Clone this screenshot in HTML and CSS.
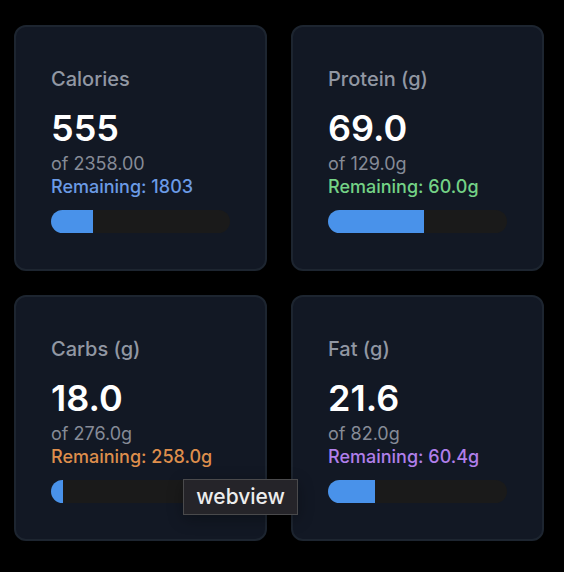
FILE: index.html
```html
<!DOCTYPE html>
<html lang="en">
<head>
<meta charset="utf-8">
<meta name="viewport" content="width=device-width, initial-scale=1">
<title>Daily nutrition</title>
<link rel="stylesheet" href="styles.css">
</head>
<body>
<main class="grid">
  <section class="card calories">
    <h2 class="label">Calories</h2>
    <p class="value">555</p>
    <p class="goal">of 2358.00</p>
    <p class="remaining">Remaining: 1803</p>
    <div class="bar"><div class="fill" style="width: 23.5%"></div></div>
  </section>
  <section class="card protein">
    <h2 class="label">Protein (g)</h2>
    <p class="value">69.0</p>
    <p class="goal">of 129.0g</p>
    <p class="remaining">Remaining: 60.0g</p>
    <div class="bar"><div class="fill" style="width: 53.5%"></div></div>
  </section>
  <section class="card carbs">
    <h2 class="label">Carbs (g)</h2>
    <p class="value">18.0</p>
    <p class="goal">of 276.0g</p>
    <p class="remaining">Remaining: 258.0g</p>
    <div class="bar"><div class="fill" style="width: 6.5%"></div></div>
    <div class="tooltip" role="tooltip">webview</div>
  </section>
  <section class="card fat">
    <h2 class="label">Fat (g)</h2>
    <p class="value">21.6</p>
    <p class="goal">of 82.0g</p>
    <p class="remaining">Remaining: 60.4g</p>
    <div class="bar"><div class="fill" style="width: 26.3%"></div></div>
  </section>
</main>
</body>
</html>
```
FILE: styles.css
```css
* {
  box-sizing: border-box;
}

body {
  margin: 0;
  background: #000;
  color: #fff;
  font-family: Inter, "Liberation Sans", sans-serif;
}

.grid {
  display: grid;
  grid-template-columns: 1fr 1fr;
  gap: 24px;
  padding: 25px 20px 31px 14px;
}

.card {
  position: relative;
  padding: 36px 35px;
  border: 2px solid #1d2530;
  border-radius: 12px;
  background: #121824;
}

.label,
.value,
.goal,
.remaining {
  margin: 0;
}

.label {
  margin-bottom: 10px;
  color: #9197a3;
  font-size: 20px;
  font-weight: 500;
  line-height: 32px;
}

.value {
  font-size: 36px;
  font-weight: 600;
  line-height: 47px;
}

.goal,
.remaining {
  font-size: 18px;
  line-height: 23px;
}

.goal {
  color: #868b97;
}

.remaining {
  font-weight: 500;
}

.calories .remaining {
  color: #6b9be6;
}

.protein .remaining {
  color: #74d286;
}

.carbs .remaining {
  color: #de8e4c;
}

.fat .remaining {
  color: #b07fea;
}

.bar {
  height: 23px;
  margin-top: 12px;
  overflow: hidden;
  border-radius: 12px;
  background: #1a1a1a;
}

.fill {
  height: 100%;
  background: #4992ea;
}

.tooltip {
  position: absolute;
  right: -33px;
  bottom: 24px;
  padding: 0 12px;
  border: 1px solid #4a4a4c;
  background: #252429;
  box-shadow: 0 4px 16px rgb(0 0 0 / 30%);
  color: #ededed;
  font-size: 21px;
  font-weight: 500;
  line-height: 34px;
  z-index: 1;
}
```
